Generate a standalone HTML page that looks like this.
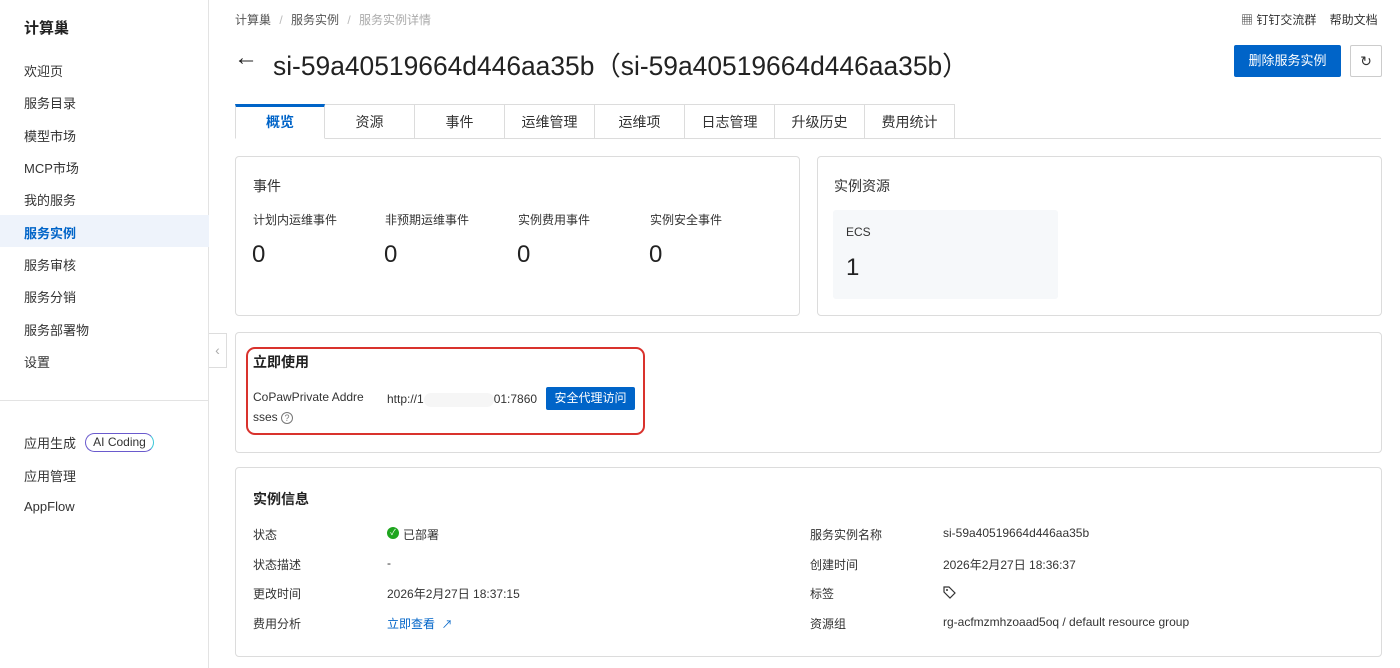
<!DOCTYPE html>
<html><head><meta charset="utf-8">
<style>
*{box-sizing:border-box;margin:0;padding:0}
body{width:1400px;height:668px;overflow:hidden;background:#fff;font-family:"Liberation Sans","Noto Sans CJK SC",sans-serif;color:#333;font-size:12px;position:relative}
.a{position:absolute;white-space:nowrap}
.side{position:absolute;left:0;top:0;width:209px;height:668px;background:#fff;border-right:1px solid #e3e3e3}
.nav{position:absolute;left:24px;font-size:13px;color:#333}
.sel{position:absolute;left:0;top:215px;width:209px;height:32px;background:#eef3fb}
.card{position:absolute;border:1px solid #dcdcdc;border-radius:4px;background:#fff}
.tab{position:absolute;top:104px;width:90px;height:35px;border:1px solid #dcdcdc;border-left:none;background:#fff;text-align:center;line-height:35px;font-size:14px;color:#333}
.h{font-size:14px;color:#333}
.lbl{font-size:12px;color:#333}
</style></head><body>
<div class="side"></div>
<div class="sel"></div>
<div class="nav" style="top:17px;font-size:15px;font-weight:bold;color:#222">计算巢</div>
<div class="nav" style="top:61px">欢迎页</div>
<div class="nav" style="top:93px">服务目录</div>
<div class="nav" style="top:126px">模型市场</div>
<div class="nav" style="top:158px">MCP市场</div>
<div class="nav" style="top:190px">我的服务</div>
<div class="nav" style="top:223px;color:#0064c8;font-weight:bold">服务实例</div>
<div class="nav" style="top:255px">服务审核</div>
<div class="nav" style="top:287px">服务分销</div>
<div class="nav" style="top:320px">服务部署物</div>
<div class="nav" style="top:352px">设置</div>
<div class="a" style="left:0;top:400px;width:209px;height:1px;background:#e3e3e3"></div>
<div class="nav" style="top:433px">应用生成</div>
<div class="a" style="left:85px;top:433px;width:69px;height:19px;border:1px solid #6a5acd;border-right-color:#3cc6d8;border-radius:10px;font-size:12px;line-height:17px;text-align:center;color:#333">AI Coding</div>
<div class="nav" style="top:466px">应用管理</div>
<div class="nav" style="top:499px">AppFlow</div>
<div class="a" style="left:209px;top:333px;width:18px;height:35px;border:1px solid #ddd;border-left:none;background:#fff;color:#aaa;font-size:14px;line-height:33px;text-align:center">‹</div>

<div class="a" style="left:235px;top:11px;font-size:12px;color:#555">计算巢 <span style="color:#bbb;margin:0 5px">/</span> 服务实例 <span style="color:#bbb;margin:0 5px">/</span> <span style="color:#aaa">服务实例详情</span></div>
<div class="a" style="left:1241px;top:11px;font-size:12px;color:#333">▦ 钉钉交流群 &nbsp;&nbsp; 帮助文档</div>
<div class="a" style="left:234px;top:44px;font-size:24px;color:#222">←</div>
<div class="a" style="left:273px;top:44px;font-size:26.4px;color:#222">si-59a40519664d446aa35b（si-59a40519664d446aa35b）</div>
<div class="a" style="left:1234px;top:45px;width:107px;height:32px;background:#0064c8;color:#fff;font-size:13px;line-height:32px;text-align:center;border-radius:2px">删除服务实例</div>
<div class="a" style="left:1350px;top:45px;width:32px;height:32px;border:1px solid #ccc;border-radius:2px;text-align:center;line-height:30px;font-size:14px;color:#333">↻</div>

<div class="a" style="left:235px;top:138px;width:1146px;height:1px;background:#dcdcdc"></div>
<div class="tab" style="left:235px;border-left:1px solid #dcdcdc;border-top:3px solid #0064c8;border-bottom:1px solid #fff;color:#0064c8;font-weight:bold;line-height:31px">概览</div>
<div class="tab" style="left:325px">资源</div>
<div class="tab" style="left:415px">事件</div>
<div class="tab" style="left:505px">运维管理</div>
<div class="tab" style="left:595px">运维项</div>
<div class="tab" style="left:685px">日志管理</div>
<div class="tab" style="left:775px">升级历史</div>
<div class="tab" style="left:865px">费用统计</div>

<div class="card" style="left:235px;top:156px;width:565px;height:160px"></div>
<div class="a h" style="left:253px;top:176px">事件</div>
<div class="a lbl" style="left:253px;top:211px">计划内运维事件</div>
<div class="a lbl" style="left:385px;top:211px">非预期运维事件</div>
<div class="a lbl" style="left:518px;top:211px">实例费用事件</div>
<div class="a lbl" style="left:650px;top:211px">实例安全事件</div>
<div class="a" style="left:252px;top:241px;font-size:24px;color:#222">0</div>
<div class="a" style="left:384px;top:241px;font-size:24px;color:#222">0</div>
<div class="a" style="left:517px;top:241px;font-size:24px;color:#222">0</div>
<div class="a" style="left:649px;top:241px;font-size:24px;color:#222">0</div>

<div class="card" style="left:817px;top:156px;width:565px;height:160px"></div>
<div class="a h" style="left:834px;top:176px">实例资源</div>
<div class="a" style="left:833px;top:210px;width:225px;height:89px;background:#f6f8fa;border-radius:3px"></div>
<div class="a lbl" style="left:846px;top:225px">ECS</div>
<div class="a" style="left:846px;top:254px;font-size:24px;color:#222">1</div>

<div class="card" style="left:235px;top:332px;width:1147px;height:121px"></div>
<div class="a" style="left:246px;top:347px;width:399px;height:88px;border:2px solid #d9322d;border-radius:9px"></div>
<div class="a h" style="left:253px;top:352px;font-weight:bold;color:#222">立即使用</div>
<div class="a" style="left:253px;top:390px;font-size:12px;color:#333">CoPawPrivate Addre</div>
<div class="a" style="left:253px;top:410px;font-size:12px;color:#333">sses <span style="display:inline-block;width:12px;height:12px;border:1px solid #777;border-radius:50%;font-size:9px;line-height:10px;text-align:center;color:#777">?</span></div>
<div class="a" style="left:387px;top:392px;font-size:12px;color:#333">http://1<span style="display:inline-block;width:70px;height:14px;background:#f6f6f6;vertical-align:middle;border-radius:7px"></span>01:7860</div>
<div class="a" style="left:546px;top:387px;width:89px;height:23px;background:#0064c8;color:#fff;font-size:12px;line-height:23px;text-align:center;border-radius:2px">安全代理访问</div>

<div class="card" style="left:235px;top:467px;width:1147px;height:190px"></div>
<div class="a h" style="left:253px;top:489px;font-weight:bold;color:#222">实例信息</div>
<div class="a lbl" style="left:253px;top:526px">状态</div>
<div class="a lbl" style="left:253px;top:556px">状态描述</div>
<div class="a lbl" style="left:253px;top:585px">更改时间</div>
<div class="a lbl" style="left:253px;top:615px">费用分析</div>
<div class="a" style="left:387px;top:527px;width:12px;height:12px;border-radius:50%;background:#1ea51e;color:#fff;font-size:8px;line-height:12px;text-align:center">✓</div>
<div class="a lbl" style="left:403px;top:526px">已部署</div>
<div class="a lbl" style="left:387px;top:556px">-</div>
<div class="a lbl" style="left:387px;top:585px">2026年2月27日 18:37:15</div>
<div class="a lbl" style="left:387px;top:615px;color:#0064c8">立即查看 &nbsp;<span style="font-size:11px">↗</span></div>
<div class="a lbl" style="left:810px;top:526px">服务实例名称</div>
<div class="a lbl" style="left:810px;top:556px">创建时间</div>
<div class="a lbl" style="left:810px;top:585px">标签</div>
<div class="a lbl" style="left:810px;top:615px">资源组</div>
<div class="a lbl" style="left:943px;top:526px">si-59a40519664d446aa35b</div>
<div class="a lbl" style="left:943px;top:556px">2026年2月27日 18:36:37</div>
<svg class="a" style="left:943px;top:586px" width="13" height="13" viewBox="0 0 13 13"><path d="M1 1h5l6 6-5 5-6-6z" fill="none" stroke="#333" stroke-width="1.2"/><circle cx="4" cy="4" r="1" fill="#333"/></svg>
<div class="a lbl" style="left:943px;top:615px">rg-acfmzmhzoaad5oq / default resource group</div>
</body></html>
